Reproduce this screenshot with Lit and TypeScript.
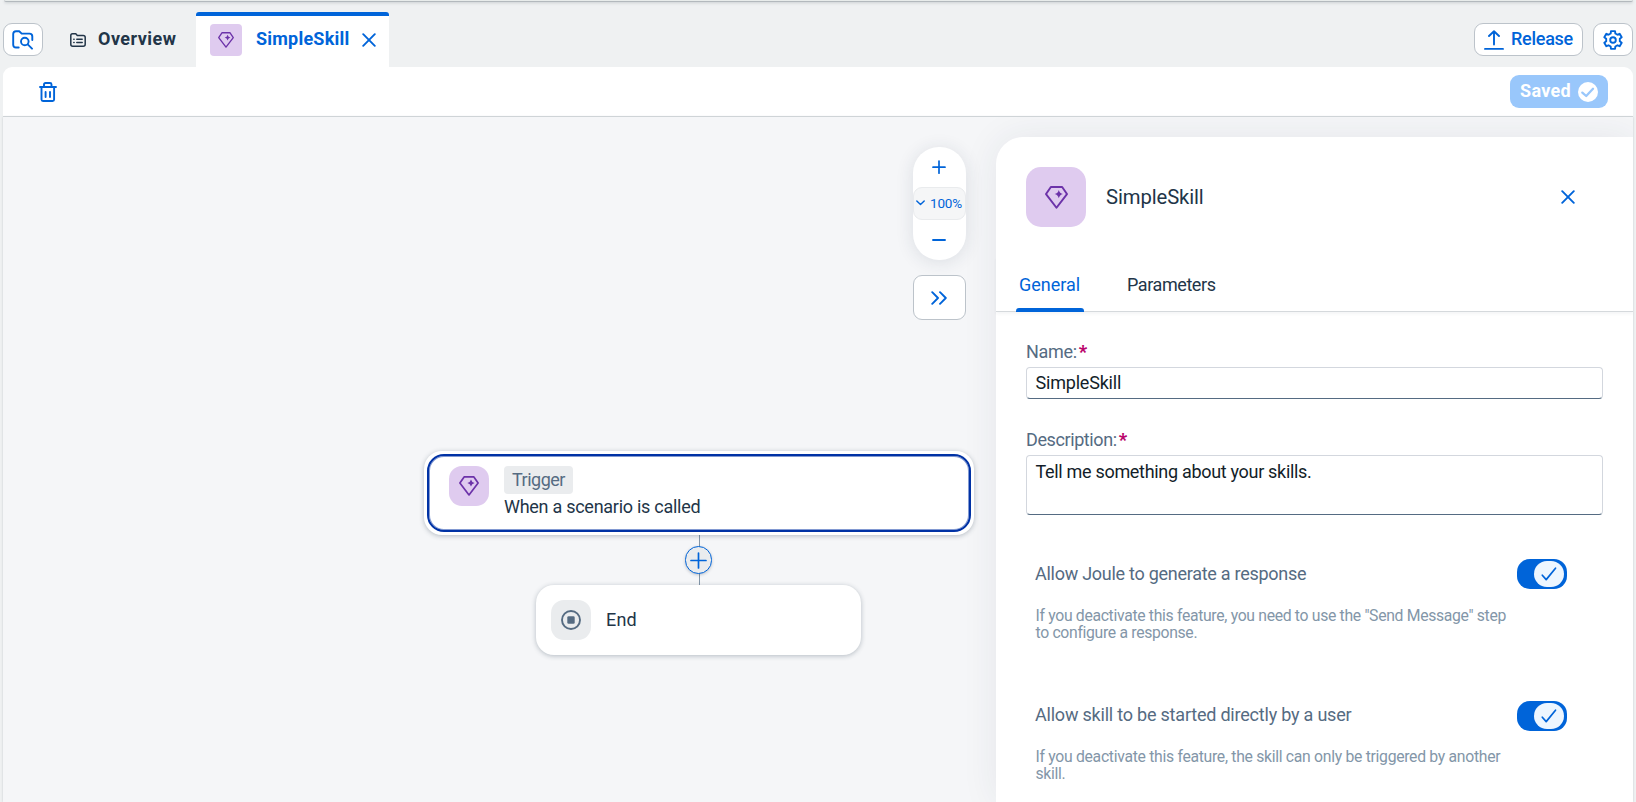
import { LitElement, html, css } from "lit";
import { customElement } from "lit/decorators.js";

const diamond = (size: number) => html`<svg width=${size} height=${size} viewBox="0 0 20 20" fill="none" stroke="#6c32a9" stroke-width="1.7" stroke-linejoin="round">
  <path d="M5.1 .9H14.9L19.1 7L10 18.9L.9 7Z" />
  <path d="M12 3.400Q12.700 6.300 15.600 7Q12.700 7.700 12 10.600Q11.300 7.700 8.400 7Q11.300 6.300 12 3.400Z" fill="#6c32a9" stroke="none" />
</svg>`;

const cross = html`<svg width="14" height="14" viewBox="0 0 14 14" fill="none" stroke="#0064d9" stroke-width="1.9" stroke-linecap="round"><path d="M1.200 1.200L12.800 12.800M12.800 1.200L1.200 12.800" /></svg>`;

/** Outline of the six-toothed settings gear in a 20 by 20 box. */
function gearPath(): string {
  const pts: string[] = [];
  for (let i = 0; i < 6; i++) {
    const mid = -90 + i * 60;
    for (const [offset, radius] of [[-20, 6.9], [-13, 9.1], [13, 9.1], [20, 6.9]]) {
      const a = ((mid + offset) * Math.PI) / 180;
      pts.push(`${(10 + radius * Math.cos(a)).toFixed(2)} ${(10 + radius * Math.sin(a)).toFixed(2)}`);
    }
  }
  return "M" + pts.join("L") + "Z";
}

@customElement("app-root")
export class AppRoot extends LitElement {
  static styles = css`
    :host { display: block; height: 802px; overflow: hidden; background: #eff1f2; color: #223548; font: 18px/24px Roboto, "Liberation Sans", sans-serif; }
    * { box-sizing: border-box; }
    svg { display: block; flex: none; }
    span { white-space: nowrap; }
    .page { display: flex; flex-direction: column; height: 802px; padding: 0 3px; }
    .shell { height: 2px; flex: none; margin: 0 0 0 1px; background: #e8eceb; border-bottom: 1px solid #b3b9bd; border-radius: 0 0 8px 8px; box-shadow: 0 1px 3px #c5cacd; }
    .tabs { display: flex; height: 65px; flex: none; padding-top: 10px; }
    .btn { display: flex; align-items: center; justify-content: center; width: 40px; height: 33px; margin-top: 11px; padding-top: 1px; border: 1px solid #bcc3ca; border-radius: 9px; background: #fff; }
    .overview { display: flex; align-items: center; width: 106px; height: 32px; margin: 12px 0 0 27px; gap: 12px; font-weight: 700; }
    .overview span { padding-bottom: 2px; letter-spacing: .47px; }
    .tab { display: flex; width: 193px; height: 55px; margin-left: 20px; padding: 8px 0 0 14px; background: #fff; border-top: 4px solid #0064d9; border-radius: 3px 3px 0 0; color: #0064d9; font-weight: 700; }
    .tab .text { width: 120px; flex: none; padding: 3px 0 0 14px; letter-spacing: .22px; }
    .tab .x { margin-top: 9px; }
    .mini { display: flex; align-items: center; justify-content: center; width: 32px; height: 32px; background: #dfcbef; border-radius: 4px; }
    .spacer { flex: 1; }
    .release { width: 109px; gap: 7px; margin-right: 10px; justify-content: flex-start; padding: 0 0 1px 9px; color: #0064d9; font-weight: 500; letter-spacing: -.26px; }
    .release svg { margin-top: 2px; }
    .toolbar { display: flex; align-items: center; justify-content: space-between; height: 50px; flex: none; padding: 1px 25px 0 36px; background: #fff; border-bottom: 1px solid #d5d9dc; border-radius: 9px 9px 0 0; }
    .saved { display: flex; align-items: center; width: 98px; height: 33px; margin-bottom: 1px; padding-left: 10px; background: #99c7fb; border-radius: 9px; color: #fff; font-weight: 700; letter-spacing: .3px; }
    .saved span { width: 58px; padding-bottom: 1px; }
    .work { display: flex; flex: 1; min-height: 0; background: #f5f6f8; overflow: hidden; box-shadow: 0 0 2px #c5cacd; }
    .canvas { position: relative; width: 993px; padding: 30px 30px 0 0; display: flex; flex-direction: column; align-items: flex-end; gap: 15px; letter-spacing: -.27px; }
    .zoom { display: flex; flex-direction: column; align-items: center; width: 53px; height: 113px; background: #fff; border-radius: 26px; box-shadow: 0 2px 18px rgba(34, 53, 72, .12); }
    .zoom .cell { display: flex; align-items: center; justify-content: center; height: 40px; padding-right: 1px; }
    .pct { display: flex; align-items: center; width: 53px; height: 33px; padding: 0 0 1px 2px; gap: 5px; background: #f5f6f7; border: 1px solid #e9ebed; border-radius: 9px; font-size: 13.5px; letter-spacing: -.16px; color: #0064d9; }
    .expand { width: 53px; height: 45px; margin: 0; padding: 0 1px 0 0; }
    .node { position: absolute; background: #fff; box-shadow: 0 1px 5px rgba(34, 53, 72, .3); }
    .trigger { left: 421px; top: 334px; width: 550px; height: 84px; padding: 3px; border-radius: 18px; }
    .ring { display: flex; height: 78px; border: 2px solid #0032a5; border-radius: 17px; padding: 10px 0 0 20px; gap: 15px; box-shadow: inset 0 0 0 1px #8299d2; }
    .box { display: flex; align-items: center; justify-content: center; width: 40px; height: 40px; background: #dfcbef; border-radius: 13px; flex: none; }
    .box.grey { background: #eaecee; }
    .badge { width: 69px; height: 28px; padding: 2px 0 0 8px; background: #eaecee; border-radius: 4px; color: #556b82; letter-spacing: -.5px; }
    .when { padding-top: 1px; }
    .end { left: 533px; top: 468px; width: 325px; height: 70px; padding: 0 15px; border-radius: 18px; display: flex; align-items: center; gap: 15px; letter-spacing: .2px; }
    .line { position: absolute; left: 696px; top: 418px; width: 1px; height: 50px; background: #8396a8; }
    .add { position: absolute; left: 682px; top: 429px; width: 27px; height: 28px; display: flex; align-items: center; justify-content: center; border: 1px solid #0064d9; border-radius: 14px; background: #eaecee; box-shadow: 0 1px 3px rgba(34, 53, 72, .25); }
    .panel { flex: 1; margin-top: 20px; background: #fff; border-radius: 27px 0 0 0; box-shadow: 0 0 36px rgba(34, 53, 72, .08); }
    .head { display: flex; align-items: center; height: 120px; padding: 0 58px 0 30px; }
    .big { display: flex; align-items: center; justify-content: center; width: 60px; height: 60px; margin-right: 20px; background: #dfcbef; border-radius: 15px; }
    .title { font-size: 20.250px; letter-spacing: -.1px; }
    .ptabs { display: flex; height: 55px; padding-left: 20px; border-bottom: 1px solid #d5d9dc; box-shadow: 0 2px 3px rgba(34, 53, 72, .05); }
    .ptab { height: 55px; padding: 16px 4px 0 3px; margin-right: 40px; letter-spacing: -.42px; }
    .ptab.on { width: 68px; color: #0064d9; letter-spacing: 0; }
    .ptab.on::after { content: ""; display: block; width: 68px; height: 4px; margin: 11px 0 0 -3px; background: #0064d9; border-radius: 3px 3px 0 0; }
    .form { display: flex; flex-direction: column; padding: 28px 30px 0; }
    .label { display: flex; height: 27px; gap: 2px; color: #556b82; letter-spacing: -.3px; }
    .label b { color: #ba066c; font-size: 18px; font-weight: 900; }
    .field { height: 32px; padding: 3px 9px 0 8.500px; border: 1px solid #d3d7de; border-bottom-color: #556b82; border-radius: 4px; color: #131e29; background: #fff; letter-spacing: -.2px; }
    .field.area { height: 60px; padding-top: 4px; letter-spacing: -.31px; }
    .label.second { height: 28px; margin-top: 28px; padding-top: 1px; letter-spacing: -.4px; }
    .row { display: flex; justify-content: space-between; height: 30px; padding: 3px 36px 0 9px; margin-top: 44px; color: #556b82; letter-spacing: -.27px; }
    .row.later { margin-top: 60px; padding-top: 2px; letter-spacing: -.21px; }
    .switch { display: flex; justify-content: flex-end; width: 50px; height: 30px; margin-top: -3px; padding: 2px 3px; background: #0064d9; border-radius: 13px; }
    .later .switch { margin-top: -2px; }
    .knob { display: flex; align-items: center; justify-content: center; width: 30px; height: 26px; background: #edf6ff; border-radius: 13px; }
    .help { display: flex; flex-direction: column; height: 34px; margin-top: 18px; padding: 0 9.500px; font-size: 15.750px; line-height: 17px; letter-spacing: -.32px; color: #8396a8; }
    .later + .help { margin-top: 17px; letter-spacing: -.3px; }
  `;

  private toggle(label: string, later = false) {
    return html`<div class="row ${later ? "later" : ""}"><span>${label}</span>
      <div class="switch"><div class="knob"><svg width="16" height="14" viewBox="0 0 16 14" fill="none" stroke="#0064d9" stroke-width="1.7" stroke-linecap="round" stroke-linejoin="round"><path d="M1.300 8.200L5.200 12.600L14.500 1.200" /></svg></div></div></div>`;
  }

  render() {
    return html`<div class="page">
      <div class="shell"></div>
      <div class="tabs">
        <div class="btn"><svg width="22" height="20" viewBox="0 0 22 20" fill="none" stroke="#0064d9" stroke-width="1.9" stroke-linecap="round" stroke-linejoin="round"><path d="M6.700 17.500H4Q1.200 17.500 1.200 14.700V4Q1.200 1.200 4 1.200H7.200L9.700 3.600H17.500Q20.300 3.600 20.300 6.400V10" /><circle cx="12.800" cy="11.500" r="3.800" /><path d="M15.700 14.400L20 18.700" /></svg></div>
        <div class="overview"><svg width="16" height="14" viewBox="0 0 16 14" fill="none" stroke="#223548" stroke-width="1.500" stroke-linecap="round" stroke-linejoin="round"><path d="M2.500 .8H5.800L7.300 2.400H13.200Q15.200 2.400 15.200 4.400V11.200Q15.200 13.200 13.200 13.200H2.700Q.8 13.200 .8 11.200V2.600Q.8 .8 2.500 .8Z" /><path d="M3.800 6.300H4.100M6.800 6.300H12.200M3.800 9.600H4.100M6.800 9.600H12.200" /></svg><span>Overview</span></div>
        <div class="tab"><div class="mini">${diamond(16)}</div><div class="text"><span>SimpleSkill</span></div><div class="x">${cross}</div></div>
        <div class="spacer"></div>
        <div class="btn release"><svg width="20" height="20" viewBox="0 0 20 20" fill="none" stroke="#0064d9" stroke-width="1.900" stroke-linecap="round" stroke-linejoin="round"><path d="M10 14.500V1.200M5 6L10 1.200L15 6M1 18.900H19" /></svg><span>Release</span></div>
        <div class="btn"><svg width="20" height="20" viewBox="0 0 20 20" fill="none" stroke="#0064d9" stroke-width="1.900" stroke-linejoin="round"><path d=${gearPath()} /><circle cx="10" cy="10" r="2.800" /></svg></div>
      </div>
      <div class="toolbar">
        <svg width="18" height="20" viewBox="0 0 18 20" fill="none" stroke="#0064d9" stroke-width="1.900" stroke-linecap="round" stroke-linejoin="round"><path d="M1 5H17M5 4.500V2.500Q5 1 6.500 1H11Q12.500 1 12.500 2.500V4.500M2.500 5.500V17.500Q2.500 19 4 19H13.600Q15.100 19 15.100 17.500V5.500M6.600 10V15M11 10V15" /></svg>
        <div class="saved"><span>Saved</span><svg width="20" height="20" viewBox="0 0 20 20" fill="none"><circle cx="10" cy="10" r="10" fill="#fff" /><path d="M4.300 10.600L8.200 14L15 6.800" stroke="#99c7fb" stroke-width="2.300" stroke-linecap="round" stroke-linejoin="round" /></svg></div>
      </div>
      <div class="work">
        <div class="canvas">
          <div class="zoom">
            <div class="cell"><svg width="14" height="14" viewBox="0 0 14 14" stroke="#0064d9" stroke-width="1.700" stroke-linecap="round"><path d="M1 7.200H13M7 1V13.200" /></svg></div>
            <div class="pct"><svg width="9" height="6" viewBox="0 0 9 6" fill="none" stroke="#0064d9" stroke-width="1.400" stroke-linecap="round" stroke-linejoin="round"><path d="M.8 .9L4.500 4.600L8.200 .9" /></svg><span>100%</span></div>
            <div class="cell"><svg width="14" height="14" viewBox="0 0 14 14" stroke="#0064d9" stroke-width="1.900" stroke-linecap="round"><path d="M1 7H13" /></svg></div>
          </div>
          <div class="btn expand"><svg width="16" height="14" viewBox="0 0 16 14" fill="none" stroke="#0064d9" stroke-width="1.900" stroke-linecap="round" stroke-linejoin="round"><path d="M1.200 1.200L7 7L1.200 12.800M9 1.200L14.800 7L9 12.800" /></svg></div>
          <div class="line"></div>
          <div class="node trigger"><div class="ring"><div class="box">${diamond(20)}</div><div><div class="badge"><span>Trigger</span></div><div class="when"><span>When a scenario is called</span></div></div></div></div>
          <div class="add"><svg width="17" height="17" viewBox="0 0 17 17" stroke="#0064d9" stroke-width="1.700" stroke-linecap="round"><path d="M1 8.500H16M8.500 1V16" /></svg></div>
          <div class="node end"><div class="box grey"><svg width="20" height="20" viewBox="0 0 20 20"><circle cx="10" cy="10" r="9" fill="none" stroke="#556b82" stroke-width="1.900" /><rect x="6.300" y="6.300" width="7.400" height="7.400" rx="1.300" fill="#556b82" /></svg></div><span>End</span></div>
        </div>
        <div class="panel">
          <div class="head"><div class="big">${diamond(23)}</div><span class="title">SimpleSkill</span><div class="spacer"></div>${cross}</div>
          <div class="ptabs"><div class="ptab on"><span>General</span></div><div class="ptab"><span>Parameters</span></div></div>
          <div class="form">
            <div class="label"><span>Name:</span><b>*</b></div>
            <div class="field"><span>SimpleSkill</span></div>
            <div class="label second"><span>Description:</span><b>*</b></div>
            <div class="field area"><span>Tell me something about your skills.</span></div>
            ${this.toggle("Allow Joule to generate a response")}
            <div class="help"><span>If you deactivate this feature, you need to use the "Send Message" step</span><span>to configure a response.</span></div>
            ${this.toggle("Allow skill to be started directly by a user", true)}
            <div class="help"><span>If you deactivate this feature, the skill can only be triggered by another</span><span>skill.</span></div>
          </div>
        </div>
      </div>
    </div>`;
  }
}
